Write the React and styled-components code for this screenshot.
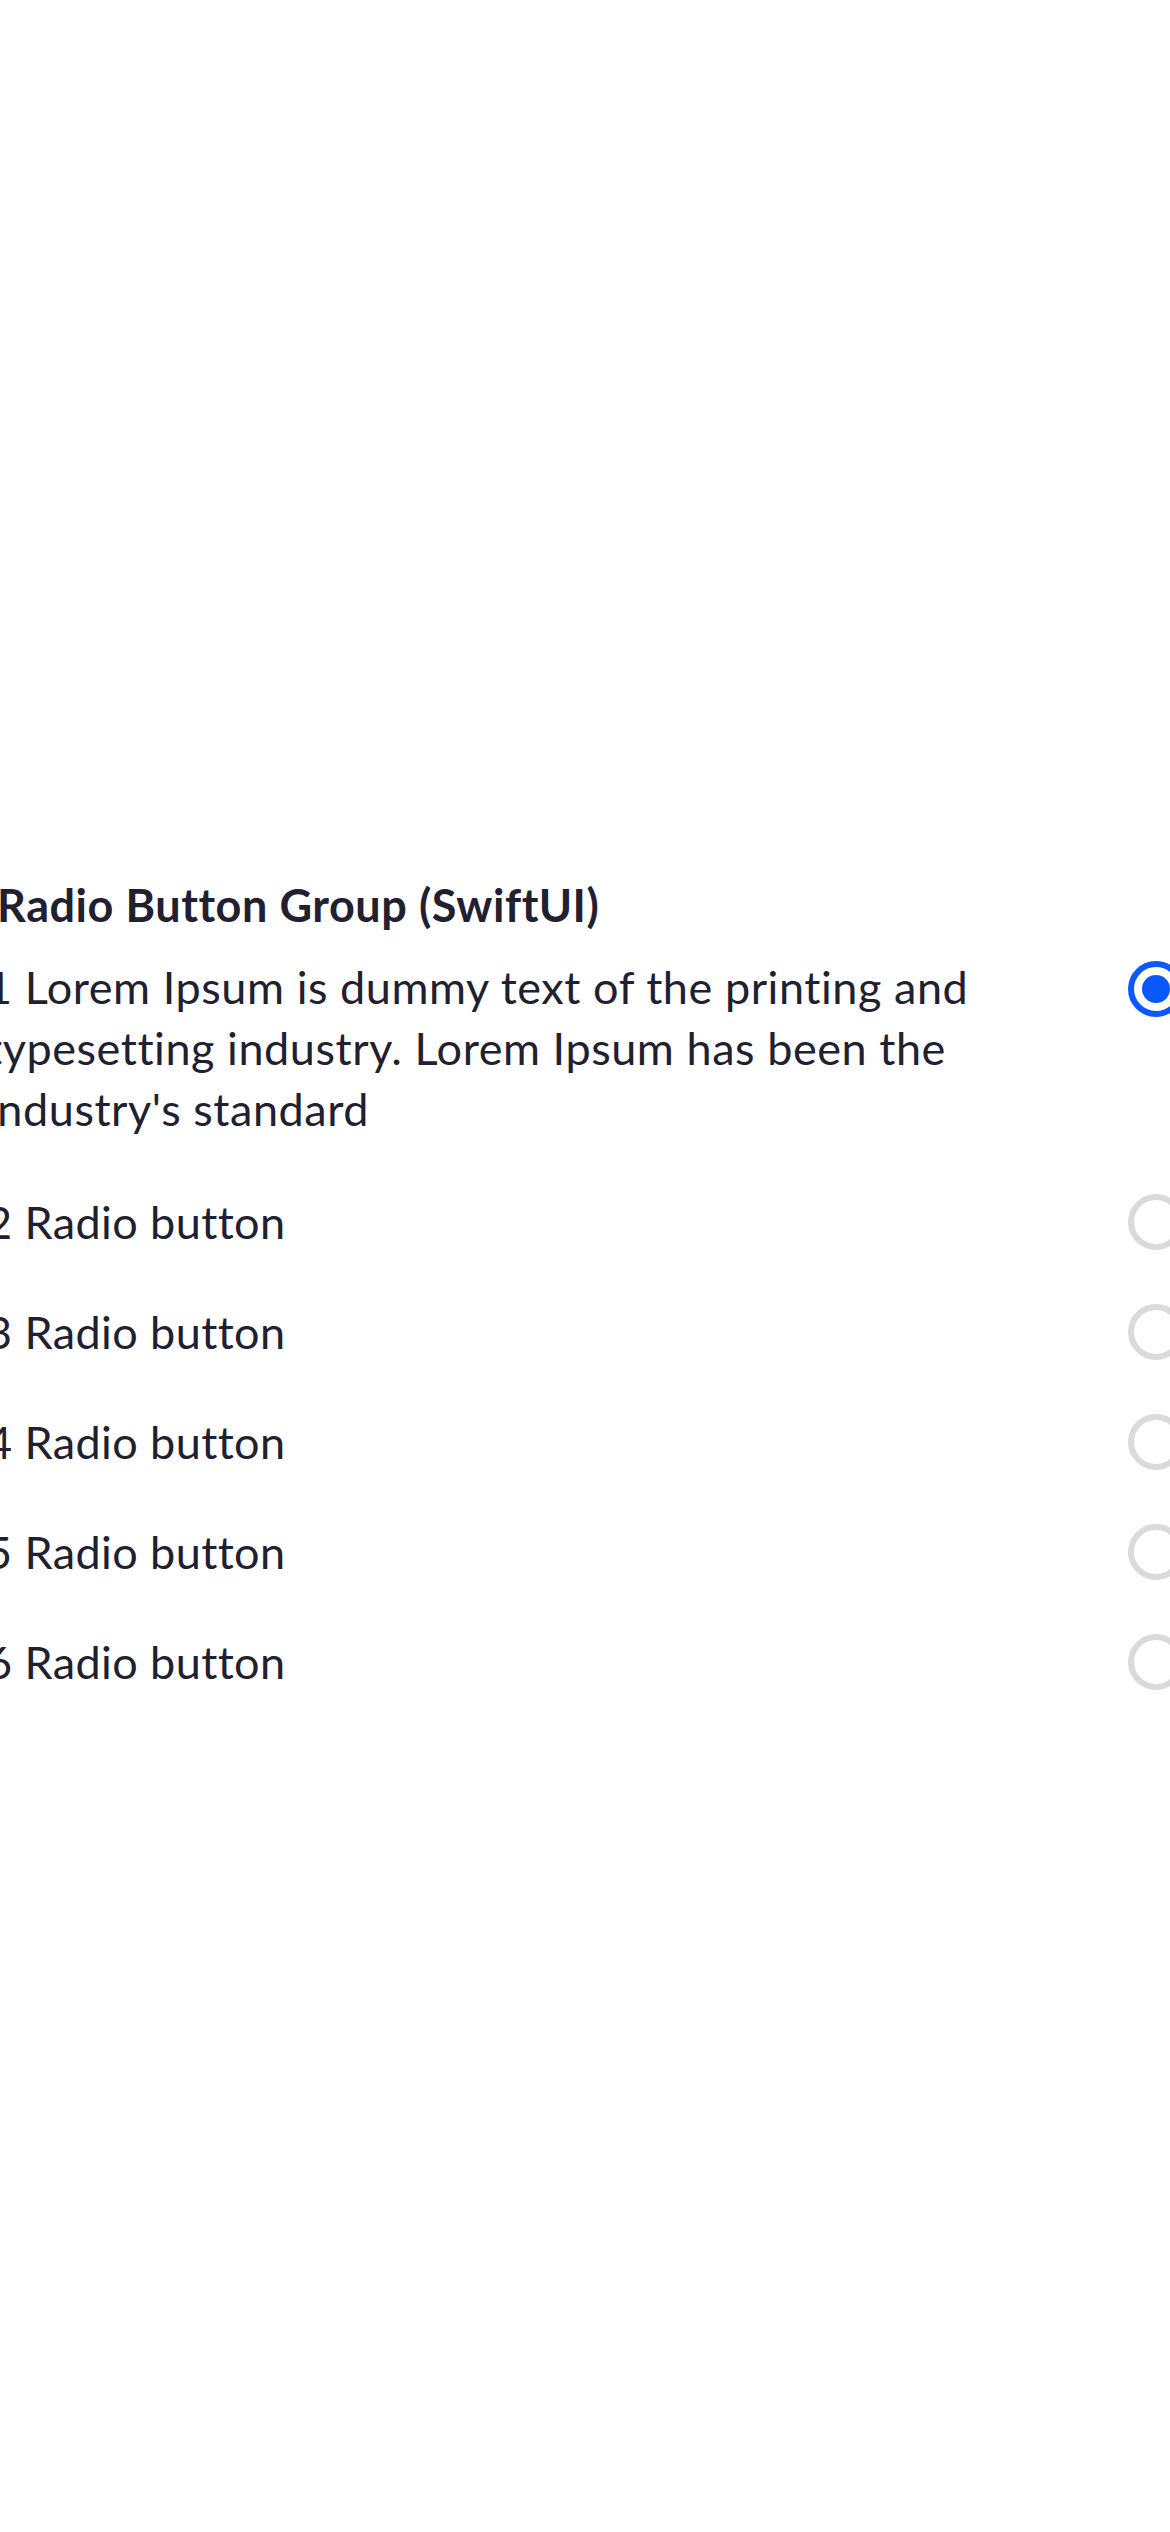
import React from 'react'
import styled, {createGlobalStyle} from 'styled-components'

const GlobalStyle = createGlobalStyle`
    html, body {
        margin: 0;
        padding: 0;
        background: #fff;
        overflow-x: hidden;
    }
    body {
        font-family: Lato, "Noto Sans", sans-serif;
        color: #1f2130;
    }
`

const Screen = styled.div`
    min-height: 2532px;
    padding-top: 878px;
    box-sizing: border-box;
`

const Title = styled.h2`
    margin: 0 0 25px -3px;
    font-size: 45px;
    line-height: 54px;
    font-weight: 700;
    letter-spacing: 0.55px;
    color: #1f2130;
`

const Group = styled.ul`
    list-style: none;
    margin: 0 0 0 -14px;
    padding: 0;
    width: 1198px;
    display: flex;
    flex-direction: column;
    gap: 54px;
`

const Row = styled.li`
    display: flex;
    align-items: ${p => (p.multiline ? 'flex-start' : 'center')};
    gap: 44px;
    cursor: pointer;
`

const Label = styled.span`
    flex: 1;
    font-size: 45px;
    letter-spacing: ${p => (p.multiline ? '0.55px' : '0.4px')};
    line-height: ${p => (p.multiline ? '61px' : '56px')};
`

const Radio = styled.span`
    flex: none;
    width: 56px;
    height: 56px;
    box-sizing: border-box;
    border-radius: 50%;
    border: 6px solid ${p => (p.checked ? '#0a58ff' : '#dadadd')};
    margin-top: ${p => (p.multiline ? '4px' : '0')};
    display: flex;
    align-items: center;
    justify-content: center;

    &::after {
        content: '';
        display: ${p => (p.checked ? 'block' : 'none')};
        width: 28px;
        height: 28px;
        border-radius: 50%;
        background: #0a58ff;
    }
`

const options = [
    "1 Lorem Ipsum is dummy text of the printing and typesetting industry. Lorem Ipsum has been the industry's standard",
    '2 Radio button',
    '3 Radio button',
    '4 Radio button',
    '5 Radio button',
    '6 Radio button',
]

const App = () => {
    const [selected, setSelected] = React.useState(0)
    return (
        <Screen>
            <GlobalStyle />
            <Title>Radio Button Group (SwiftUI)</Title>
            <Group>
                {options.map((text, i) => (
                    <Row key={i} multiline={i === 0} onClick={() => setSelected(i)}>
                        <Label multiline={i === 0}>{text}</Label>
                        <Radio checked={selected === i} multiline={i === 0} />
                    </Row>
                ))}
            </Group>
        </Screen>
    )
}

export default App
